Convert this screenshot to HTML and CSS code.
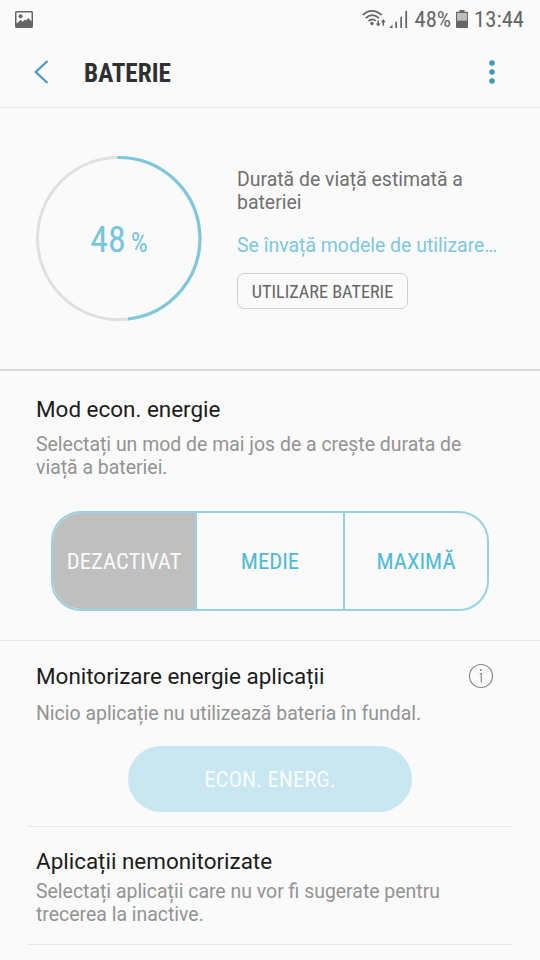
FILE: index.html
```html
<!DOCTYPE html>
<html lang="ro">
<head>
<meta charset="utf-8">
<title>Baterie</title>
<link rel="stylesheet" href="styles.css">
</head>
<body>
<div class="statusbar">
  <svg class="picture" width="18" height="17" viewBox="0 0 18 17"><path fill="#666" fill-rule="evenodd" d="M1.500 0h15A1.500 1.500 0 0 1 18 1.500v14a1.500 1.500 0 0 1-1.500 1.500h-15A1.500 1.500 0 0 1 0 15.500v-14A1.500 1.500 0 0 1 1.500 0zM1.500 1.500v11L5.800 9l2 1.800 2-2.300 1.300 1L13.300 7l3.200 3.500v-9z"/><circle cx="5.600" cy="5.300" r="2" fill="#666"/></svg>
  <div class="status-right">
    <svg class="wifi" width="25" height="19" viewBox="0 0 25 19"><g fill="none" stroke="#666" stroke-width="1.700"><path d="M.7 6Q10-2.400 19.700 6"/><path d="M3.700 9.200Q10 3.200 17 9.200"/><path d="M6.600 12.200Q10.200 8.800 13.800 11.800"/></g><circle cx="10" cy="14.500" r="1.700" fill="#666"/><path d="M16.200 11.500v4.500M21.300 16.800v-4.500" stroke="#666" stroke-width="1.500"/><path fill="#666" d="M13.800 14.600h4.800L16.200 17.600zM18.900 13.200h4.800l-2.400-3.200z"/></svg>
    <svg class="signal" width="20" height="19" viewBox="0 0 20 19"><path fill="#666" d="M0 18l3.500-3.500V18zM6.300 11.800h1.700V18H6.300zM11.300 6.800h1.700V18h-1.700zM16.300 1h1.800v17h-1.800z"/></svg>
    <span class="status-text percent">48%</span>
    <svg class="battery" width="12" height="18" viewBox="0 0 12 18"><path fill="#666" d="M3.500 0h5v1.800H11a1 1 0 0 1 1 1V17a1 1 0 0 1-1 1H1a1 1 0 0 1-1-1V2.800a1 1 0 0 1 1-1h2.500z"/><path fill="#bdbdbd" d="M1 3h10v7.700H1z"/></svg>
    <span class="status-text">13:44</span>
  </div>
</div>
<header class="appbar">
  <svg class="back" width="15" height="24" viewBox="0 0 15 24"><path d="M13.500 1L1.700 12l11.800 11" fill="none" stroke="#4399bd" stroke-width="2.100"/></svg>
  <h1>BATERIE</h1>
  <svg class="more" width="6" height="24" viewBox="0 0 6 24" fill="#4399b5"><circle cx="3" cy="3" r="2.800"/><circle cx="3" cy="12" r="2.800"/><circle cx="3" cy="21" r="2.800"/></svg>
</header>
<section class="summary">
  <div class="gauge">
    <svg width="166" height="166" viewBox="0 0 166 166" fill="none" stroke-width="3"><circle cx="82.500" cy="82.500" r="81" stroke="#e0e0e0"/><path d="M81.500 1.500H82.500A81 81 0 0 1 92 163" stroke="#7cc7de"/></svg>
    <div class="level"><span class="level-number">48</span><span class="level-sign">%</span></div>
  </div>
  <div class="estimate">
    <p class="estimate-label">Durată de viață estimată a<br>bateriei</p>
    <p class="learning">Se învață modele de utilizare…</p>
    <button class="usage"><span>UTILIZARE BATERIE</span></button>
  </div>
</section>
<section class="saving">
  <h2>Mod econ. energie</h2>
  <p>Selectați un mod de mai jos de a crește durata de<br>viață a bateriei.</p>
  <div class="modes">
    <button class="mode selected"><span>DEZACTIVAT</span></button>
    <button class="mode"><span>MEDIE</span></button>
    <button class="mode"><span>MAXIMĂ</span></button>
  </div>
</section>
<section class="monitor">
  <div class="monitor-head">
    <h2>Monitorizare energie aplicații</h2>
    <svg width="26" height="26" viewBox="0 0 26 26"><circle cx="13" cy="13" r="11.500" fill="none" stroke="#888" stroke-width="1.200"/><path d="M11.700 10.500h1.600v9" fill="none" stroke="#888" stroke-width="1.200"/><circle cx="13" cy="7" r="1.100" fill="#888"/></svg>
  </div>
  <p>Nicio aplicație nu utilizează bateria în fundal.</p>
  <button class="save"><span>ECON. ENERG.</span></button>
</section>
<section class="unmonitored">
  <h2>Aplicații nemonitorizate</h2>
  <p>Selectați aplicații care nu vor fi sugerate pentru<br>trecerea la inactive.</p>
</section>
</body>
</html>
```

FILE: styles.css
```css
* { box-sizing: border-box; }
body {
  margin: 0;
  width: 540px;
  height: 960px;
  overflow: hidden;
  background: #fafafa;
  font-family: Roboto, sans-serif;
  font-size: 19.45px;
  line-height: 23px;
  color: #939393;
}
h1, h2, p { margin: 0; white-space: nowrap; }
svg { display: block; flex: none; }
button {
  margin: 0;
  padding: 0;
  background: none;
  border: 0;
  font-family: "Roboto Condensed", Roboto, sans-serif;
  font-stretch: 75%;
  white-space: nowrap;
}
.statusbar {
  height: 38px;
  padding: 0 16px 0 15px;
  display: flex;
  align-items: center;
  justify-content: space-between;
}
.status-right { display: flex; align-items: center; }
.wifi { margin-top: -1px; }
.signal { margin-left: 2px; }
.status-text {
  font-family: "Roboto Condensed", Roboto, sans-serif;
  font-stretch: 75%;
  font-size: 22.6px;
  color: #666;
}
.percent { margin-left: 6px; }
.battery { margin: -1px 6px 0 5px; }
.appbar {
  height: 70px;
  padding: 0 45px 0 34px;
  display: flex;
  align-items: center;
  border-bottom: 1px solid #e8e8e8;
}
.back, .more { margin-bottom: 1px; }
.appbar h1 {
  flex: 1;
  margin: 2px 0 0 35px;
  font-family: "Roboto Condensed", Roboto, sans-serif;
  font-stretch: 75%;
  font-size: 25.2px;
  font-weight: 700;
  color: #303030;
}
.summary {
  height: 263px;
  padding: 48px 0 0 36px;
  display: flex;
  gap: 35px;
  border-bottom: 2px solid #d9d9d9;
}
.gauge { width: 166px; height: 166px; display: grid; }
.gauge > * { grid-area: 1 / 1; }
.level {
  display: flex;
  align-items: baseline;
  justify-content: center;
  padding-top: 66px;
  line-height: 36px;
  font-family: "Roboto Condensed", Roboto, sans-serif;
  font-stretch: 75%;
  color: #74c6df;
}
.level-number { font-size: 36px; }
.level-sign { font-size: 27px; margin-left: 5px; }
.estimate { padding-top: 13px; }
.estimate-label { color: #707070; line-height: 22.500px; }
.learning { margin-top: 20px; color: #7cc8e0; }
.usage {
  display: block;
  width: 171px;
  height: 36px;
  margin-top: 16px;
  border: 1.500px solid #cfcfcf;
  border-radius: 7px;
  font-size: 18.2px;
  color: #666;
}
h2 { font-size: 22.45px; line-height: 26px; font-weight: 400; color: #1c1c1c; }
.saving {
  height: 270px;
  padding: 25px 36px 0;
  border-bottom: 1px solid #e8e8e8;
}
.saving p { margin-top: 12px; line-height: 22.500px; }
.modes {
  width: 438px;
  height: 100px;
  margin: 32px 0 0 15px;
  display: grid;
  grid-template-columns: 142px 148px 1fr;
  border: 2px solid #96d3e4;
  border-radius: 30px;
  overflow: hidden;
}
.mode { padding-top: 1px; font-size: 22.7px; color: #4dbbd6; border-left: 2px solid #96d3e4; }
.mode:first-child { border-left: 0; }
.mode.selected { background: #bfbfbf; color: #fafafa; }
.monitor {
  height: 186px;
  margin: 0 27px;
  padding: 22px 19px 0 9px;
  border-bottom: 1px solid #e8e8e8;
}
.monitor-head { display: flex; justify-content: space-between; align-items: center; }
.monitor p { margin-top: 13px; }
.save {
  display: block;
  width: 284px;
  height: 66px;
  margin: 21px 0 0 92px;
  border-radius: 33px;
  background: #c9e7f0;
  color: #f7fcfe;
  font-size: 22.8px;
  padding-top: 1px;
}
.unmonitored {
  height: 118px;
  margin: 0 27px;
  padding: 21px 9px 0;
  border-bottom: 1px solid #e8e8e8;
}
.unmonitored p { margin-top: 7px; line-height: 22.500px; }
```
